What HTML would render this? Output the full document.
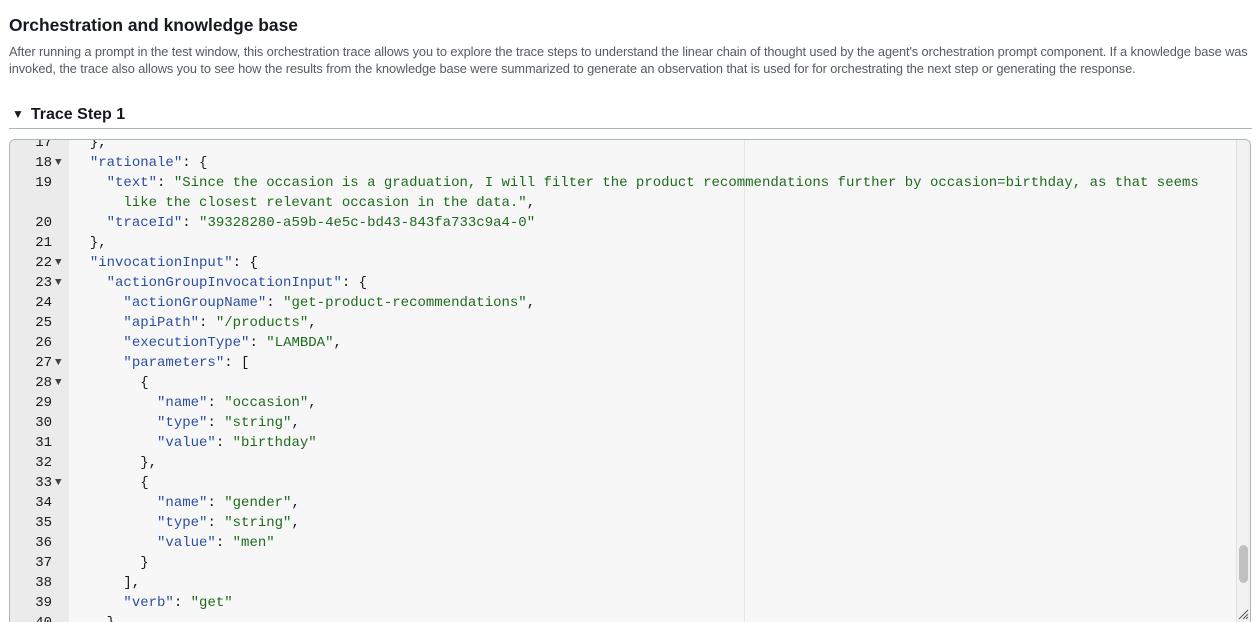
<!DOCTYPE html>
<html><head><meta charset="utf-8"><style>
body{margin:0;background:#fff;width:1260px;height:621px;overflow:hidden;font-family:"Liberation Sans",sans-serif;color:#16191f}
h1{position:absolute;left:9px;top:13px;margin:0;font-size:17.4px;font-weight:bold;line-height:24px}
.desc{position:absolute;left:9px;top:43px;font-size:12.8px;line-height:17px;color:#545b64;white-space:nowrap;letter-spacing:-0.1px}
.ts{position:absolute;left:12px;top:104px;font-size:16px;font-weight:bold;line-height:22px}
.ts span{font-size:12px;margin-right:7px;position:relative;top:-1px}
.hr{position:absolute;left:9px;top:128px;width:1243px;height:1px;background:#aab7b8}
.ed{position:absolute;left:9px;top:139px;width:1240px;height:482px;border:1px solid #aab7b8;border-bottom:0;border-radius:6px 6px 0 0;background:#f7f7f7;overflow:hidden}
.gut{position:absolute;left:0;top:0;width:59px;height:100%;background:#ebebeb}
.pm{position:absolute;left:734px;top:0;width:1px;height:100%;background:#e6e6e6}
.sb{position:absolute;left:1226px;top:0;width:14px;height:100%;background:#f2f2f2;border-left:1px solid #e0e0e0}
.th{position:absolute;left:1229px;top:405px;width:9px;height:38px;border-radius:5px;background:#c1c1c1}
.code{position:absolute;left:0;top:-7px;width:1220px;font-family:"Liberation Mono",monospace;font-size:14px;line-height:20px;color:#16191f}
.r{height:20px;position:relative}
.n{position:absolute;left:0;width:42px;text-align:right;color:#16191f}
.a{position:absolute;left:45px;font-size:11px;color:#444}
.t{position:absolute;left:63px;white-space:pre}
.k{color:#2b4fa0}.s{color:#1e6b1e}
</style></head><body>
<h1>Orchestration and knowledge base</h1>
<div class="desc">After running a prompt in the test window, this orchestration trace allows you to explore the trace steps to understand the linear chain of thought used by the agent's orchestration prompt component. If a knowledge base was<br>invoked, the trace also allows you to see how the results from the knowledge base were summarized to generate an observation that is used for for orchestrating the next step or generating the response.</div>
<div class="ts"><span>▼</span>Trace Step 1</div>
<div class="hr"></div>
<div class="ed"><div class="gut"></div><div class="pm"></div>
<div class="code">
<div class="r"><span class="n">17</span><span class="t">  },</span></div>
<div class="r"><span class="n">18</span><span class="a">▼</span><span class="t">  <span class="k">"rationale"</span>: {</span></div>
<div class="r"><span class="n">19</span><span class="t">    <span class="k">"text"</span>: <span class="s">"Since the occasion is a graduation, I will filter the product recommendations further by occasion=birthday, as that seems</span></span></div>
<div class="r"><span class="t"><span class="s">      like the closest relevant occasion in the data."</span>,</span></div>
<div class="r"><span class="n">20</span><span class="t">    <span class="k">"traceId"</span>: <span class="s">"39328280-a59b-4e5c-bd43-843fa733c9a4-0"</span></span></div>
<div class="r"><span class="n">21</span><span class="t">  },</span></div>
<div class="r"><span class="n">22</span><span class="a">▼</span><span class="t">  <span class="k">"invocationInput"</span>: {</span></div>
<div class="r"><span class="n">23</span><span class="a">▼</span><span class="t">    <span class="k">"actionGroupInvocationInput"</span>: {</span></div>
<div class="r"><span class="n">24</span><span class="t">      <span class="k">"actionGroupName"</span>: <span class="s">"get-product-recommendations"</span>,</span></div>
<div class="r"><span class="n">25</span><span class="t">      <span class="k">"apiPath"</span>: <span class="s">"/products"</span>,</span></div>
<div class="r"><span class="n">26</span><span class="t">      <span class="k">"executionType"</span>: <span class="s">"LAMBDA"</span>,</span></div>
<div class="r"><span class="n">27</span><span class="a">▼</span><span class="t">      <span class="k">"parameters"</span>: [</span></div>
<div class="r"><span class="n">28</span><span class="a">▼</span><span class="t">        {</span></div>
<div class="r"><span class="n">29</span><span class="t">          <span class="k">"name"</span>: <span class="s">"occasion"</span>,</span></div>
<div class="r"><span class="n">30</span><span class="t">          <span class="k">"type"</span>: <span class="s">"string"</span>,</span></div>
<div class="r"><span class="n">31</span><span class="t">          <span class="k">"value"</span>: <span class="s">"birthday"</span></span></div>
<div class="r"><span class="n">32</span><span class="t">        },</span></div>
<div class="r"><span class="n">33</span><span class="a">▼</span><span class="t">        {</span></div>
<div class="r"><span class="n">34</span><span class="t">          <span class="k">"name"</span>: <span class="s">"gender"</span>,</span></div>
<div class="r"><span class="n">35</span><span class="t">          <span class="k">"type"</span>: <span class="s">"string"</span>,</span></div>
<div class="r"><span class="n">36</span><span class="t">          <span class="k">"value"</span>: <span class="s">"men"</span></span></div>
<div class="r"><span class="n">37</span><span class="t">        }</span></div>
<div class="r"><span class="n">38</span><span class="t">      ],</span></div>
<div class="r"><span class="n">39</span><span class="t">      <span class="k">"verb"</span>: <span class="s">"get"</span></span></div>
<div class="r"><span class="n">40</span><span class="t">    }</span></div>
</div>
<div class="sb"></div><div class="th"></div>
<svg style="position:absolute;left:1227px;top:468px" width="12" height="12"><path d="M11 2L2 11M11 6L6 11M11 9L9 11" stroke="#555" stroke-width="1"/></svg>
</div>
</body></html>
